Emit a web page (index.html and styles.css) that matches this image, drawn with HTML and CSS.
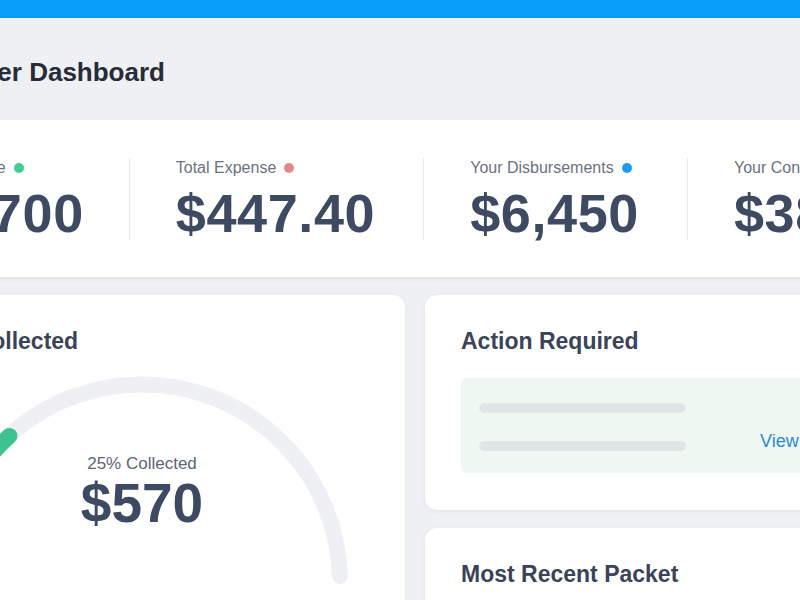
FILE: index.html
```html
<!DOCTYPE html>
<html lang="en">
<head>
    <meta charset="utf-8"/>
    <title>Manager Dashboard</title>
    <link rel="stylesheet" href="styles.css">
</head>
<body>
    <div class="topbar"></div>

    <div class="page">
        <header class="page-head">
            <h1>Manager Dashboard</h1>
        </header>

        <section class="stats">
            <div class="stat">
                <div class="stat-label">Total Income <span class="dot dot-green"></span></div>
                <div class="stat-value">$1,700</div>
            </div>
            <div class="stat">
                <div class="stat-label">Total Expense <span class="dot dot-red"></span></div>
                <div class="stat-value">$447.40</div>
            </div>
            <div class="stat">
                <div class="stat-label">Your Disbursements <span class="dot dot-blue"></span></div>
                <div class="stat-value">$6,450</div>
            </div>
            <div class="stat">
                <div class="stat-label">Your Contributions <span class="dot dot-green"></span></div>
                <div class="stat-value">$380</div>
            </div>
        </section>

        <div class="panels">
            <section class="card">
                <h2>Total Collected</h2>
                <div class="gauge">
                    <svg class="gauge-arc" width="454" height="240" viewBox="0 0 454 240">
                        <path d="M29.1 206.1 A198 198 0 0 1 424.9 206.1" fill="none" stroke="#eef0f3" stroke-width="16" stroke-linecap="round"/>
                        <path d="M29.1 206.1 A198 198 0 0 1 94.5 65.9" fill="none" stroke="#3fc28f" stroke-width="16" stroke-linecap="round"/>
                    </svg>
                    <div class="gauge-label">25% Collected</div>
                    <div class="gauge-value">$570</div>
                </div>
            </section>

            <div class="side">
                <section class="card">
                    <h2>Action Required</h2>
                    <div class="notice">
                        <div class="skeleton">
                            <span></span>
                            <span></span>
                        </div>
                        <a class="view-link" href="#">View</a>
                    </div>
                </section>

                <section class="card packet">
                    <h2>Most Recent Packet</h2>
                </section>
            </div>
        </div>
    </div>
</body>
</html>
```

FILE: styles.css
```css
html, body
{
    margin: 0;
    overflow: hidden;
    background-color: #eff0f3;
    font-family: "Liberation Sans", Arial, sans-serif;
}

.topbar
{
    height: 18px;
    background-color: #069cf7;
}

/* dashboard is wider than the window, left column starts off screen */
.page
{
    width: 1072px;
    margin-left: -121px;
}

.page-head
{
    padding: 39px 36px 33px;
}

.page-head h1
{
    margin: 0;
    font-size: 26px;
    line-height: 30px;
    color: #272c36;
}

/* stat strip */
.stats
{
    display: flex;
    padding: 38px 0 37px;
    background-color: #ffffff;
    box-shadow: 0 2px 4px rgba(30, 40, 60, 0.07);
}

.stat
{
    padding: 0 48px 0 46px;
    border-left: 1px solid #e6e8eb;
}

.stat:first-child
{
    padding-left: 36px;
    padding-right: 45px;
    border-left: none;
}

.stat-label
{
    display: flex;
    align-items: center;
    gap: 8px;
    font-size: 16px;
    line-height: 20px;
    color: #6b7280;
}

.dot
{
    width: 10px;
    height: 10px;
    border-radius: 50%;
}

.dot-green { background-color: #45c995; }
.dot-red { background-color: #e28a8a; }
.dot-blue { background-color: #1e9cf0; }

.stat-value
{
    margin-top: 8px;
    font-size: 54px;
    font-weight: bold;
    line-height: 54px;
    letter-spacing: 0.6px;
    color: #3e4a62;
}

/* cards */
.panels
{
    display: grid;
    grid-template-columns: 526px 1fr;
    column-gap: 20px;
    margin-top: 18px;
}

.side
{
    display: flex;
    flex-direction: column;
    gap: 18px;
}

.card
{
    padding: 32px 36px 37px;
    background-color: #ffffff;
    border-radius: 12px;
    box-shadow: 0 1px 4px rgba(30, 40, 60, 0.06);
}

.card h2
{
    margin: 0;
    font-size: 23px;
    line-height: 28px;
    color: #3a4357;
}

.packet
{
    min-height: 160px;
}

.gauge
{
    position: relative;
    height: 240px;
    margin-top: 15px;
    padding-top: 84px;
    box-sizing: border-box;
    text-align: center;
}

.gauge-arc
{
    position: absolute;
    top: 0;
    left: 0;
}

.gauge-label,
.gauge-value
{
    position: relative;
}

.gauge-label
{
    font-size: 17px;
    line-height: 20px;
    color: #5d6575;
}

.gauge-value
{
    margin-top: 2px;
    font-size: 55px;
    font-weight: bold;
    line-height: 55px;
    color: #3e4a62;
}

.notice
{
    display: flex;
    align-items: flex-end;
    margin-top: 23px;
    padding: 25px 18px 22px;
    background-color: #eef8f0;
    border-radius: 6px;
}

.skeleton
{
    display: flex;
    flex-direction: column;
    gap: 28px;
}

.skeleton span
{
    display: block;
    width: 207px;
    height: 10px;
    border-radius: 5px;
    background-color: #e2e5e8;
}

.view-link
{
    margin-left: 74px;
    font-size: 18px;
    line-height: 20px;
    color: #2b8bd3;
    text-decoration: none;
}
```
